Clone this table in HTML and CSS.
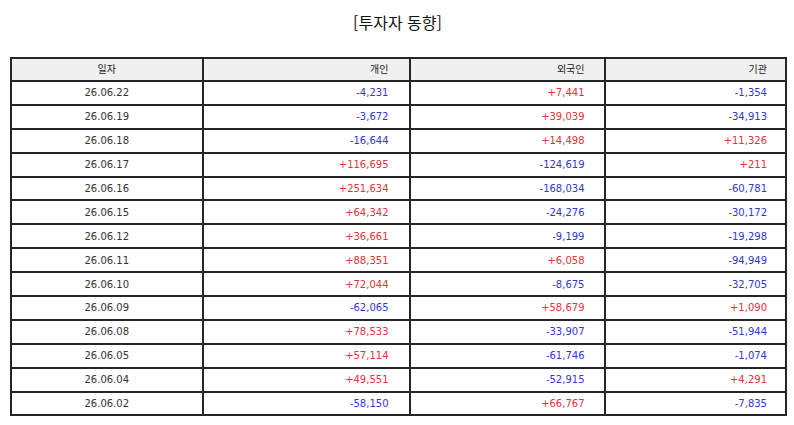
FILE: index.html
```html
<!DOCTYPE html>
<html lang="ko">
<head>
<meta charset="utf-8">
<title>투자자 동향</title>
<link rel="stylesheet" href="styles.css">
</head>
<body>
<div class="page">
  <h1 class="title">[투자자 동향]</h1>
  <table class="grid">
    <colgroup>
      <col class="c-date">
      <col class="c-ind">
      <col class="c-for">
      <col class="c-ins">
    </colgroup>
    <thead>
      <tr><th class="date">일자</th><th class="ind">개인</th><th class="for">외국인</th><th class="ins">기관</th></tr>
    </thead>
    <tbody>
      <tr><td class="date">26.06.22</td><td class="ind neg">-4,231</td><td class="for pos">+7,441</td><td class="ins neg">-1,354</td></tr>
      <tr><td class="date">26.06.19</td><td class="ind neg">-3,672</td><td class="for pos">+39,039</td><td class="ins neg">-34,913</td></tr>
      <tr><td class="date">26.06.18</td><td class="ind neg">-16,644</td><td class="for pos">+14,498</td><td class="ins pos">+11,326</td></tr>
      <tr><td class="date">26.06.17</td><td class="ind pos">+116,695</td><td class="for neg">-124,619</td><td class="ins pos">+211</td></tr>
      <tr><td class="date">26.06.16</td><td class="ind pos">+251,634</td><td class="for neg">-168,034</td><td class="ins neg">-60,781</td></tr>
      <tr><td class="date">26.06.15</td><td class="ind pos">+64,342</td><td class="for neg">-24,276</td><td class="ins neg">-30,172</td></tr>
      <tr><td class="date">26.06.12</td><td class="ind pos">+36,661</td><td class="for neg">-9,199</td><td class="ins neg">-19,298</td></tr>
      <tr><td class="date">26.06.11</td><td class="ind pos">+88,351</td><td class="for pos">+6,058</td><td class="ins neg">-94,949</td></tr>
      <tr><td class="date">26.06.10</td><td class="ind pos">+72,044</td><td class="for neg">-8,675</td><td class="ins neg">-32,705</td></tr>
      <tr><td class="date">26.06.09</td><td class="ind neg">-62,065</td><td class="for pos">+58,679</td><td class="ins pos">+1,090</td></tr>
      <tr><td class="date">26.06.08</td><td class="ind pos">+78,533</td><td class="for neg">-33,907</td><td class="ins neg">-51,944</td></tr>
      <tr><td class="date">26.06.05</td><td class="ind pos">+57,114</td><td class="for neg">-61,746</td><td class="ins neg">-1,074</td></tr>
      <tr><td class="date">26.06.04</td><td class="ind pos">+49,551</td><td class="for neg">-52,915</td><td class="ins pos">+4,291</td></tr>
      <tr><td class="date">26.06.02</td><td class="ind neg">-58,150</td><td class="for pos">+66,767</td><td class="ins neg">-7,835</td></tr>
    </tbody>
  </table>
</div>
</body>
</html>
```
FILE: styles.css
```css
html, body {
  margin: 0;
  padding: 0;
  background: #ffffff;
}
body {
  font-family: "DejaVu Sans", "Noto Sans CJK KR", sans-serif;
  color: #333333;
}
.page {
  width: 794px;
  height: 425px;
  padding: 10px 0 0 10px;
  box-sizing: border-box;
}
.title {
  margin: 0 0 23px 0;
  width: 775px;
  text-align: center;
  font-family: "Noto Sans CJK KR", sans-serif;
  font-size: 16px;
  font-weight: 400;
  line-height: 24px;
  color: #111111;
}
.grid {
  border-collapse: collapse;
  table-layout: fixed;
  width: 775px;
}
.c-date { width: 191.5px; }
.c-ind { width: 207.5px; }
.c-for { width: 195px; }
.c-ins { width: 181px; }
.grid th, .grid td {
  border: 2px solid #262626;
  height: 23.9px;
  padding: 0;
  font-size: 10px;
  font-weight: 400;
  line-height: 13px;
  box-sizing: border-box;
  vertical-align: middle;
  white-space: nowrap;
}
.grid thead th {
  height: 23px;
  background: #f0f0f0;
  color: #222222;
}
.grid .date { text-align: center; }
.grid .ind { text-align: right; padding-right: 20.5px; }
.grid .for { text-align: right; padding-right: 19.5px; }
.grid .ins { text-align: right; padding-right: 18px; }
.pos { color: #e2323a; }
.neg { color: #3535cf; }
```
